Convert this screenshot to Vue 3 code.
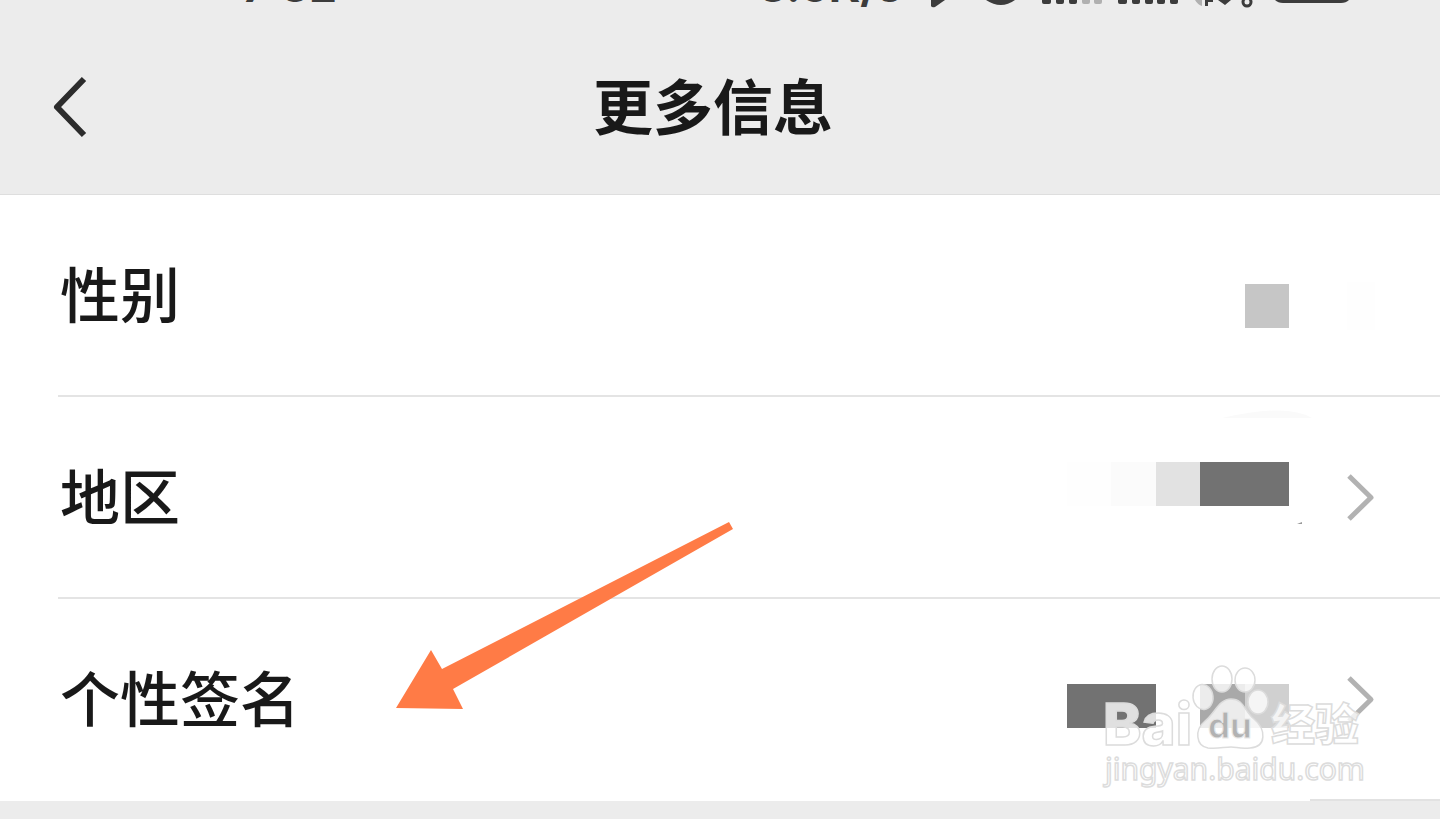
<script setup>
const rows = [
  { id: 'gender', label: '性别', chevron: false },
  { id: 'region', label: '地区', chevron: true },
  { id: 'signature', label: '个性签名', chevron: true }
]
</script>

<template>
  <main class="page">
    <header class="header">
      <div class="status">
        <span class="clock">7:32</span>
        <span class="speed">3.5K/s</span>
        <svg class="indicators" width="430" height="12" viewBox="0 0 430 12" aria-hidden="true">
          <path d="M11 0h14l-10 7q-3 1-4-1z" fill="#3c3c3c" />
          <path d="M66 0h29q-14 10-29 0z" fill="#3c3c3c" />
          <g fill="#3c3c3c">
            <rect x="122" y="-4" width="9" height="8" rx="2" />
            <rect x="136" y="-4" width="8" height="8" rx="2" />
            <rect x="149" y="-4" width="8" height="8" rx="2" />
            <rect x="198" y="-4" width="9" height="8" rx="2" />
            <rect x="212" y="-4" width="8" height="8" rx="2" />
            <rect x="225" y="-4" width="8" height="8" rx="2" />
            <rect x="237" y="-4" width="8" height="8" rx="2" />
            <rect x="250" y="-4" width="8" height="8" rx="2" />
          </g>
          <g fill="#b0b0b0">
            <rect x="162" y="-4" width="8" height="8" rx="2" />
            <rect x="174" y="-4" width="8" height="8" rx="2" />
            <path d="M275 0h7v6q-4-1-7-6z" />
          </g>
          <path d="M285 0h8v2h-5v4h-3zM298 0h13l-6 5z" fill="#3c3c3c" />
          <circle cx="327" cy="2" r="4" fill="none" stroke="#3c3c3c" stroke-width="3" />
          <path d="M355 0h74q-3 3-8 3h-58q-5 0-8-3z" fill="#3c3c3c" />
        </svg>
      </div>
      <div class="titlebar">
        <button class="back" type="button" aria-label="返回">
          <svg width="36" height="62" viewBox="0 0 36 62">
            <path d="M32 3L5 31L32 59" fill="none" stroke="#2c2c2c" stroke-width="6" stroke-linejoin="round" />
          </svg>
        </button>
        <h1 class="title">更多信息</h1>
      </div>
    </header>

    <section class="list">
      <button v-for="row in rows" :key="row.id" class="row" :class="row.id" type="button">
        <span class="content">
          <span class="label">{{ row.label }}</span>
          <span class="value">
            <i class="block a"></i><i class="block b"></i><i class="block c"></i><i class="block d"></i><i class="block e"></i>
          </span>
          <svg class="chevron" width="28" height="48" viewBox="0 0 28 48" aria-hidden="true">
            <path v-if="row.chevron" d="M2 3L24 24.500L2 46" fill="none" stroke="#b2b2b2" stroke-width="5" stroke-linejoin="round" />
          </svg>
        </span>
      </button>

      <svg class="smudge" width="90" height="118" viewBox="0 0 90 118" aria-hidden="true">
        <path d="M0 9Q65-6 90 9z" fill="#fafafa" />
        <path d="M75 115l5-2v2z" fill="#999" />
      </svg>

      <svg class="arrow" width="340" height="190" viewBox="0 0 340 190" aria-hidden="true">
        <path d="M333 2L337 9L57 169L67 189L0 188L35 130L46 149z" fill="#ff7b46" />
      </svg>

      <svg class="watermark" width="270" height="140" viewBox="0 0 270 140" role="img" aria-label="Baidu 经验">
        <g fill="#fff" fill-opacity=".78" stroke="#dcdcdc" stroke-width="1.500">
          <text class="brand" x="3" y="94">Bai</text>
          <ellipse cx="122" cy="28" rx="10" ry="13" />
          <ellipse cx="145" cy="29" rx="10" ry="12" />
          <ellipse cx="103" cy="46" rx="10" ry="12.500" transform="rotate(-6 103 46)" />
          <ellipse cx="158" cy="51" rx="10" ry="12" />
          <path d="M131 48C144 48 144 60 154 68C166 78 167 96 150 97C139 98 137 96 131 96C124 96 118 98 108 97C96 95 94 79 105 70C115 62 119 48 131 48z" />
          <text class="cn" x="171" y="90">经验</text>
          <text class="url" x="5" y="129">jingyan.baidu.com</text>
        </g>
        <text class="du" x="108" y="87" fill="#b2b2b2" stroke="#e8e8e8" stroke-width="1">du</text>
      </svg>
    </section>
  </main>
</template>

<style>
body {
  background: #ececec;
}
</style>

<style scoped>
.page {
  font-family: "Noto Sans CJK SC", sans-serif;
  color: #191919;
}
.header {
  border-bottom: 1px solid #dedede;
  background: #ececec;
}
.status {
  display: flex;
  align-items: flex-start;
  height: 20px;
  padding: 0 90px 0 242px;
  overflow: hidden;
  color: #3c3c3c;
  font: 700 44px/44px Inter, sans-serif;
}
.clock,
.speed {
  margin-top: -36px;
}
.clock {
  flex: 1;
}
.speed {
  margin-right: 18px;
}
.indicators {
  flex: none;
}
.titlebar {
  display: grid;
  grid-template-columns: 96px 1fr 110px;
  align-items: center;
  height: 174px;
}
.back {
  display: flex;
  padding: 0 0 0 52px;
  border: 0;
  background: none;
}
.title {
  margin: 0;
  padding-bottom: 6px;
  text-align: center;
  font-size: 60px;
  line-height: 80px;
  font-weight: 700;
}
.list {
  position: relative;
  background: #fff;
}
.list::after {
  content: "";
  position: absolute;
  right: 0;
  bottom: 0;
  width: 130px;
  height: 2px;
  background: #e2e2e2;
}
.row {
  display: block;
  width: 100%;
  padding: 0 0 0 58px;
  border: 0;
  background: none;
  color: inherit;
  font: inherit;
  text-align: left;
}
.content {
  display: flex;
  align-items: center;
  height: 200px;
  padding-right: 65px;
  border-bottom: 2px solid #e4e4e4;
}
.row:last-of-type .content {
  border-color: transparent;
}
.label {
  flex: 1;
  padding: 0 0 6px 2px;
  font-size: 60px;
  line-height: 80px;
  font-weight: 500;
}
.value {
  display: flex;
  width: 222px;
  margin-right: 58px;
}
.gender .value {
  margin-top: 22px;
}
.region .value {
  margin-bottom: 26px;
}
.signature .value {
  margin-top: 14px;
}
.block {
  flex: 1;
  height: 44px;
}
.gender .e {
  background: #c6c6c6;
}
.gender .chevron {
  margin-top: 22px;
  background: #fefefe;
}
.region .a {
  background: #fefefe;
}
.region .b {
  background: #fbfbfb;
}
.region .c {
  background: #e2e2e2;
}
.region .d,
.region .e,
.signature .a,
.signature .b {
  background: #727272;
}
.signature .d {
  background: #a9a9a9;
}
.signature .e {
  background: #d0d0d0;
}
.smudge {
  position: absolute;
  top: 214px;
  right: 128px;
}
.arrow {
  position: absolute;
  top: 325px;
  left: 396px;
}
.watermark {
  position: absolute;
  right: 70px;
  bottom: 10px;
}
.brand {
  font: 800 58px Inter, sans-serif;
}
.cn {
  font: 900 44px "Noto Sans CJK SC", sans-serif;
}
.url {
  font: 400 30px "Noto Sans", sans-serif;
}
.du {
  font: 700 35px Inter, sans-serif;
}
</style>
